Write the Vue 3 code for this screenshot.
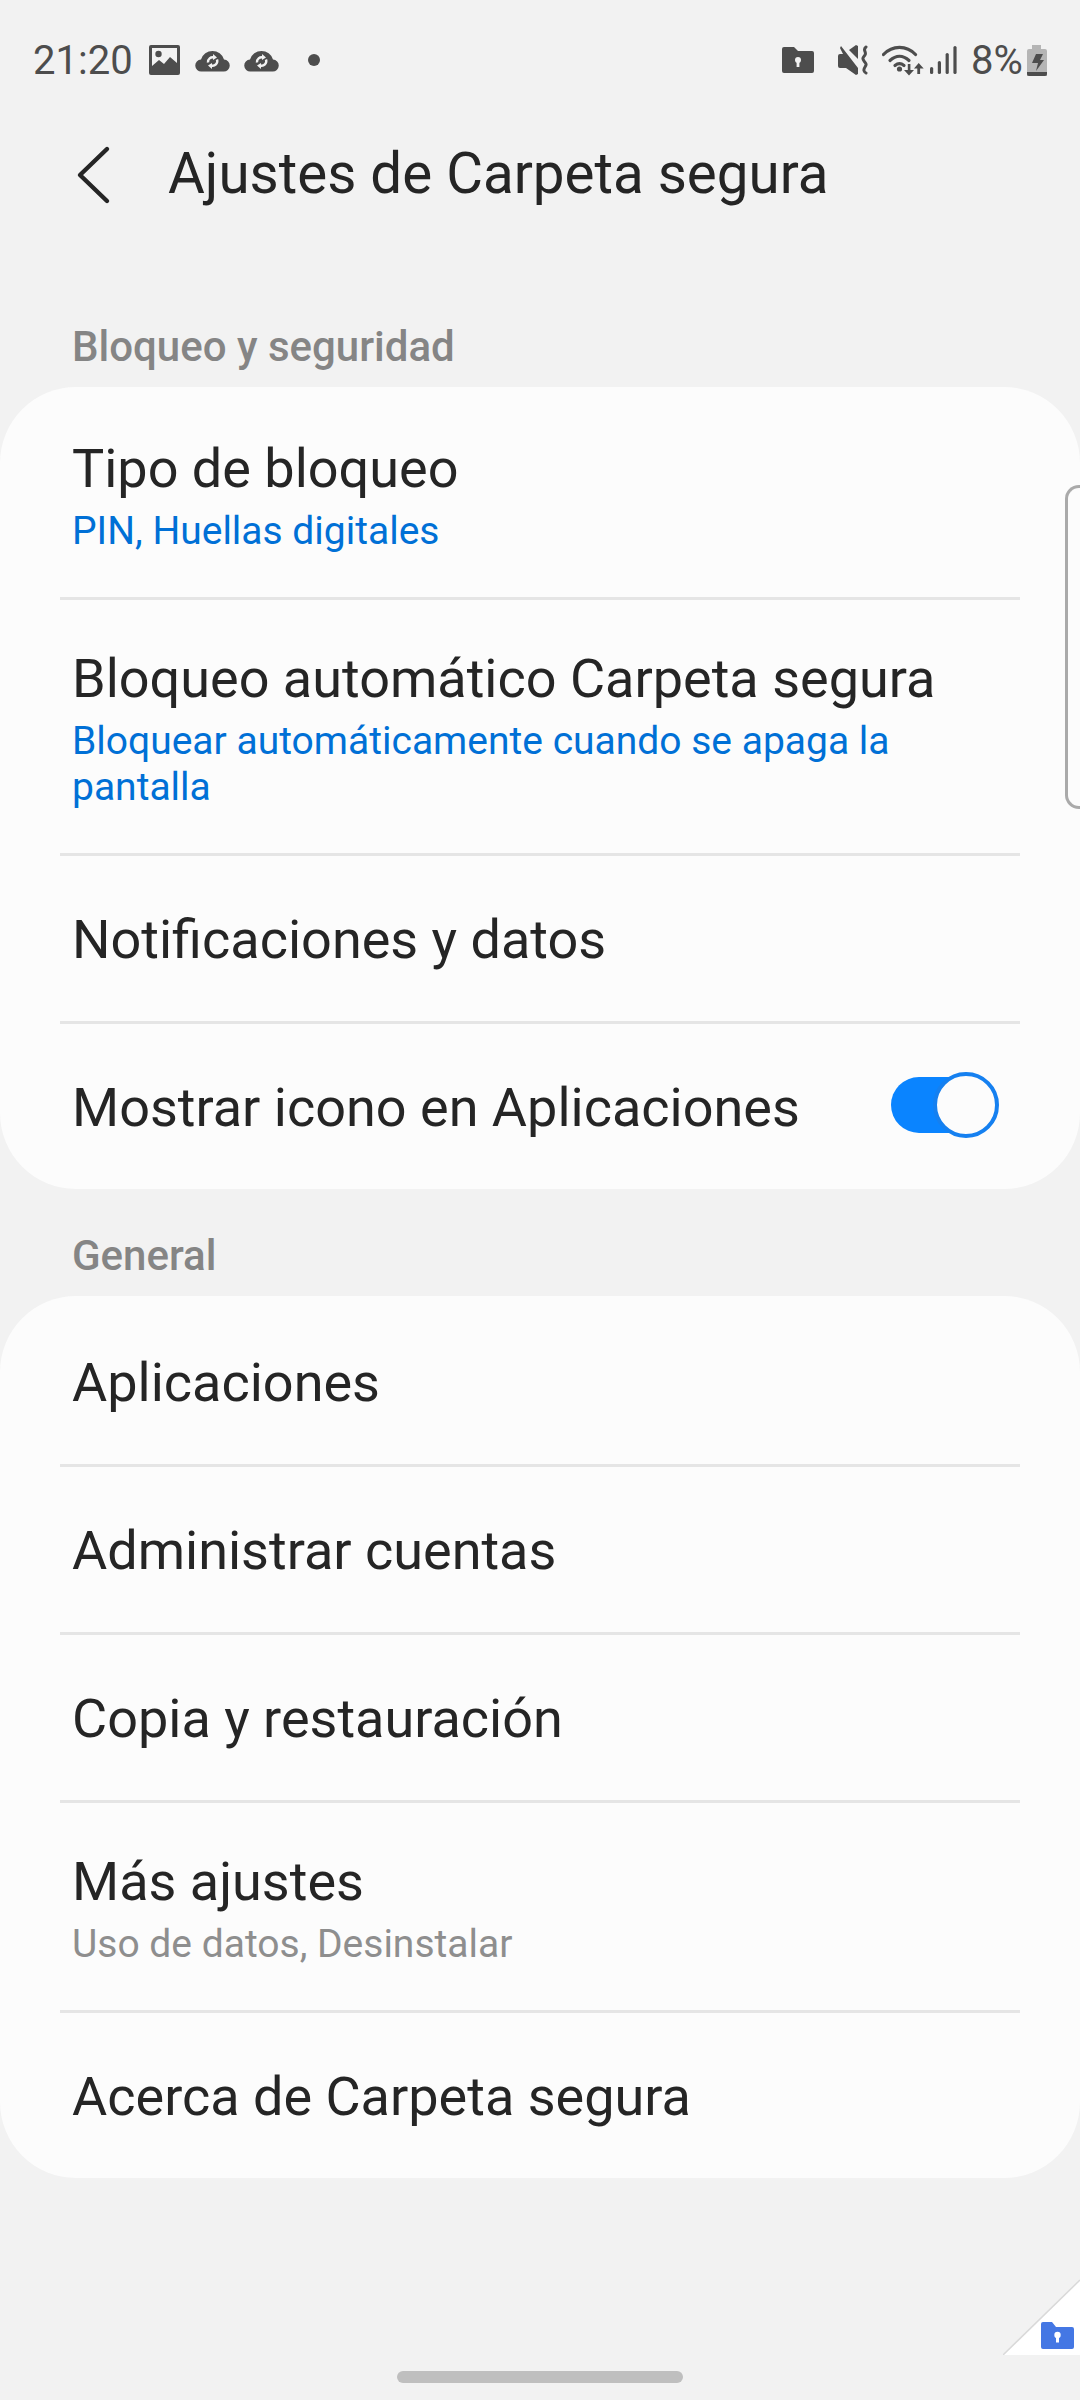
<template>
  <div class="screen">
    <header class="status-bar">
      <span class="clock">21:20</span>
      <svg class="ic-image" viewBox="0 0 31 30">
        <path fill="#4d4d4d" fill-rule="evenodd" d="M2 0h27a2 2 0 0 1 2 2v26a2 2 0 0 1-2 2H2a2 2 0 0 1-2-2V2a2 2 0 0 1 2-2zM3 3v18l7-6 5 4 6-7 7 6V3z" />
        <circle cx="9.500" cy="9" r="3.200" fill="#4d4d4d" />
      </svg>
      <svg v-for="n in 2" :key="n" class="ic-cloud" viewBox="0 0 35 24">
        <path fill="#4d4d4d" d="M6.500 23.500a6 6 0 0 1-.5-12 12 12 0 0 1 23 0 6 6 0 0 1-.5 12z" />
        <path fill="none" stroke="#f2f2f2" stroke-width="2.400" d="M13 14.500a4.700 4.700 0 0 1 6-5M22 11.500a4.700 4.700 0 0 1-6 6" />
        <path fill="#f2f2f2" d="M18 6l4 3.500-4 2.500zM17 21l-4-3.500 4-2.500z" />
      </svg>
      <span class="dot"></span>

      <span class="status-right">
        <svg class="ic-folder" viewBox="0 0 32 26">
          <path fill="#4d4d4d" d="M2 0h10l4 4h14a2 2 0 0 1 2 2v18a2 2 0 0 1-2 2H2a2 2 0 0 1-2-2V2a2 2 0 0 1 2-2z" />
          <circle cx="16" cy="13" r="3" fill="#f2f2f2" />
          <rect x="14.600" y="14" width="2.800" height="6" fill="#f2f2f2" />
        </svg>
        <svg class="ic-mute" viewBox="0 0 31 30">
          <path fill="#4d4d4d" d="M3 1l17 22v6l-2 1-10-7H2a2 2 0 0 1-2-2V11a2 2 0 0 1 2-2h3L2 3z" />
          <path fill="#4d4d4d" d="M11 5l7-5 2 1v13z" />
          <path fill="none" stroke="#4d4d4d" stroke-width="3" stroke-linecap="round" d="M28 2c-4 3 1 5-1 8s-3 3-1 6 3 3 1 6-1 5 1 6" />
        </svg>
        <svg class="ic-wifi" viewBox="0 0 44 31">
          <g fill="none" stroke="#4d4d4d" stroke-width="3.200" stroke-linecap="round">
            <path d="M1.500 9.500c9-9.500 23-9.500 32 0" />
            <path d="M8 15.500c6-5.500 13-5.500 19 0" />
            <path d="M13 20.500c3-2.500 6-2.500 9 0" />
          </g>
          <circle cx="17.500" cy="24" r="2.600" fill="#4d4d4d" />
          <path fill="#4d4d4d" d="M25.800 19h2.600v6H32l-5 5.500-5-5.500h3.800zM36.700 18l5 5.500h-3.600V29h-2.800v-5.500H32z" />
        </svg>
        <svg class="ic-signal" viewBox="0 0 27 28">
          <g fill="#4d4d4d">
            <rect x="0" y="21" width="3.200" height="7" rx="1.600" />
            <rect x="7.800" y="15" width="3.200" height="13" rx="1.600" />
            <rect x="15.600" y="7" width="3.200" height="21" rx="1.600" />
            <rect x="23.400" y="0" width="3.200" height="28" rx="1.600" />
          </g>
        </svg>
        <span class="battery-pct">8%</span>
        <svg class="ic-battery" viewBox="0 0 20 31">
          <path fill="#b5b5b5" d="M5 0h9v4h4a2 2 0 0 1 2 2v25H0V6a2 2 0 0 1 2-2h3z" />
          <path fill="#4d4d4d" d="M0 27h20v2a2 2 0 0 1-2 2H2a2 2 0 0 1-2-2z" />
          <path fill="#4d4d4d" d="M9 9h7l-3 6h4l-8 11 2-8H5z" />
        </svg>
      </span>
    </header>

    <div class="app-bar">
      <svg class="back" viewBox="0 0 36 60">
        <path fill="none" stroke="#252525" stroke-width="4.400" stroke-linecap="round" stroke-linejoin="round" d="M32 4L5 30l27 26" />
      </svg>
      <h1 class="title">Ajustes de Carpeta segura</h1>
    </div>

    <template v-for="group in groups" :key="group.name">
      <div class="group-label"><span>{{ group.name }}</span></div>
      <section class="card">
        <div v-for="row in group.rows" :key="row.title" class="row">
          <div class="row-text" :class="{ 'two-line': row.sub }">
            <div class="row-title">{{ row.title }}</div>
            <div v-if="row.sub" class="row-sub" :class="{ blue: row.blue }">{{ row.sub }}</div>
          </div>
          <div v-if="row.toggle" class="switch">
            <span class="thumb"></span>
          </div>
        </div>
      </section>
    </template>

    <div class="scroll-handle"></div>

    <svg class="corner" viewBox="0 0 77 77">
      <path fill="#fff" d="M77 2v75H0z" />
      <path stroke="#d9d9d9" stroke-width="1.500" d="M77 2L0 77" />
      <path fill="#4477e4" d="M40 44h9l4 5h16a2 2 0 0 1 2 2v18a2 2 0 0 1-2 2H40a2 2 0 0 1-2-2V46a2 2 0 0 1 2-2z" />
      <circle cx="54.500" cy="57" r="3.200" fill="#fff" />
      <rect x="53" y="58" width="3" height="6.500" fill="#fff" />
    </svg>

    <div class="home-bar"></div>
  </div>
</template>

<script setup>
const groups = [
  {
    name: 'Bloqueo y seguridad',
    rows: [
      { title: 'Tipo de bloqueo', sub: 'PIN, Huellas digitales', blue: true },
      { title: 'Bloqueo automático Carpeta segura', sub: 'Bloquear automáticamente cuando se apaga la pantalla', blue: true },
      { title: 'Notificaciones y datos' },
      { title: 'Mostrar icono en Aplicaciones', toggle: true },
    ],
  },
  {
    name: 'General',
    rows: [
      { title: 'Aplicaciones' },
      { title: 'Administrar cuentas' },
      { title: 'Copia y restauración' },
      { title: 'Más ajustes', sub: 'Uso de datos, Desinstalar' },
      { title: 'Acerca de Carpeta segura' },
    ],
  },
]
</script>

<style scoped>
.screen {
  width: 1080px; height: 2400px; background: #f2f2f2; position: relative; overflow: hidden;
  font-family: Roboto, "Noto Sans", sans-serif; color: #252525;
}

.status-bar { height: 120px; display: flex; align-items: center; padding: 0 33px; box-sizing: border-box; }
.clock { font-size: 40px; color: #4d4d4d; width: 116px; }
.ic-image { width: 31px; height: 30px; }
.ic-cloud { width: 35px; height: 24px; margin-left: 15px; }
.ic-cloud:nth-of-type(3) { margin-left: 14px; }
.dot { width: 12px; height: 12px; border-radius: 50%; background: #4d4d4d; margin-left: 29px; }
.status-right { margin-left: auto; display: flex; align-items: center; }
.ic-folder { width: 32px; height: 26px; }
.ic-mute { width: 31px; height: 30px; margin-left: 24px; }
.ic-wifi { width: 44px; height: 31px; margin-left: 13px; }
.ic-signal { width: 27px; height: 28px; margin-left: 4px; }
.battery-pct { font-size: 40px; color: #4d4d4d; margin-left: 14px; width: 56px; }
.ic-battery { width: 20px; height: 31px; }

.app-bar { height: 110px; display: flex; align-items: center; margin-bottom: 50px; padding-left: 75px; }
.back { width: 36px; height: 60px; flex-shrink: 0; }
.title { font-size: 56.500px; font-weight: 400; margin: 0 0 2px 57px; }

.group-label { height: 107px; padding-left: 72px; box-sizing: border-box; }
.group-label span { display: block; font-size: 42px; font-weight: 500; line-height: 48px; color: #858585; padding-top: 43px; }

.card { background: #fcfcfc; border-radius: 76px; }
.row {
  min-height: 168px; padding: 0 83px 0 72px; display: flex; align-items: center;
  position: relative; box-sizing: border-box;
}
.row + .row::before {
  content: ""; position: absolute; top: 0; left: 60px; right: 60px; height: 3px; background: #e5e5e5;
}
.row-text { flex: 1; padding-top: 6px; }
.row-text.two-line { padding: 51px 0 43px; }
.row-title { font-size: 54px; line-height: 62px; }
.row-sub { font-size: 39px; line-height: 46px; margin-top: 8px; color: #8e8e8e; }
.row-sub.blue { color: #0070d6; }

.switch { width: 106px; height: 56px; border-radius: 28px; background: #0a84ff; position: relative; }
.thumb {
  position: absolute; right: -2px; top: -5px; width: 66px; height: 66px; box-sizing: border-box;
  border-radius: 50%; background: #fcfcfc; border: 4px solid #1580f0;
}

.scroll-handle {
  position: absolute; right: 0; top: 485px; width: 15px; height: 324px; box-sizing: border-box;
  border: 3px solid #aaa; border-right: 0; border-radius: 14px 0 0 14px;
}

.corner { position: absolute; right: 0; top: 2278px; width: 77px; height: 77px; }

.home-bar { position: absolute; left: 397px; top: 2371px; width: 286px; height: 12px; border-radius: 6px; background: #bfbfbf; }
</style>
